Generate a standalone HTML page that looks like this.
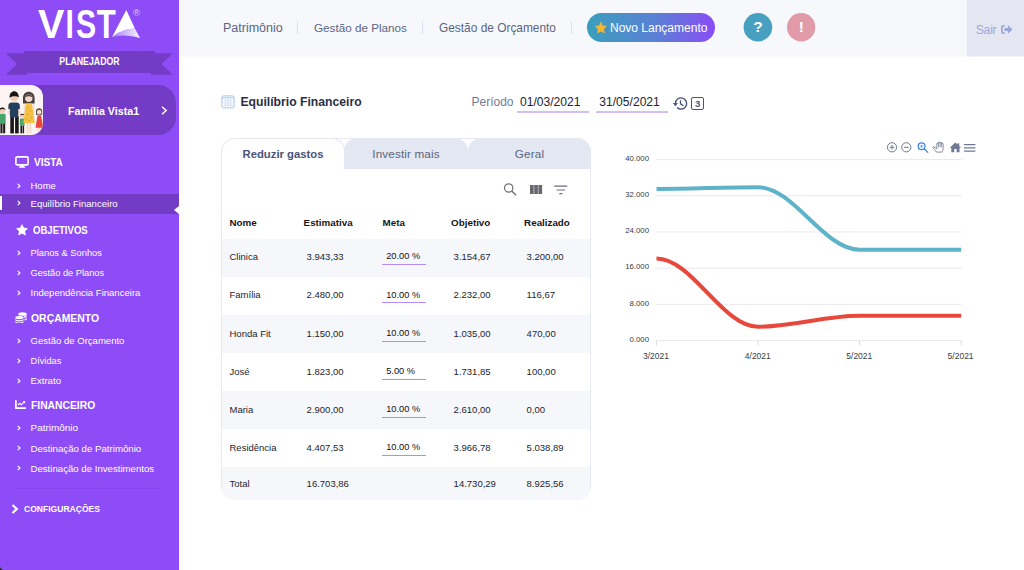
<!DOCTYPE html>
<html lang="pt-BR">
<head>
<meta charset="utf-8">
<title>Vista - Equilíbrio Financeiro</title>
<style>
*{box-sizing:border-box;margin:0;padding:0}
html,body{width:1024px;height:570px;overflow:hidden;background:#fff}
body{font-family:"Liberation Sans",sans-serif;color:#2d3142;position:relative}
ul{list-style:none}
svg{display:block}
.abs{position:absolute}
.t{position:absolute;white-space:nowrap;line-height:1}

/* ---------- sidebar ---------- */
#side{position:absolute;left:0;top:0;width:179px;height:570px;background:#8d4cf6;color:#fff}
#logo{position:absolute;left:30px;top:0;width:128px;height:48px}
#ribbon{position:absolute;left:0;top:48px;width:179px;height:30px}
#fam{position:absolute;left:0;top:85px;width:176px;height:50px;background:#733bc6;border-radius:0 18px 18px 0}
#fam .pic{position:absolute;left:0;top:0;width:43px;height:50px;background:#fcf3f3;border-radius:0 12px 12px 0;overflow:hidden}
#fam .nm{left:68px;top:20.600px;font-size:10.7px;font-weight:bold}
.sec{font-weight:bold;font-size:10.8px;left:34px;transform-origin:0 50%;transform:scaleX(.9)}
.it{font-size:9.6px;left:30.5px}
.chev{position:absolute;left:16.700px;width:4px;height:6px}
#active{position:absolute;left:0;top:194px;width:179px;height:19.5px;background:#733bc6}
#active i{position:absolute;left:0;top:2px;width:2px;height:14px;background:#fff}
#notch{position:absolute;left:174px;top:206px;width:0;height:0;border-top:4px solid transparent;border-bottom:4px solid transparent;border-right:5px solid #fff}
#sdiv{position:absolute;left:15px;top:488px;width:148px;height:1px;background:rgba(40,0,120,.09)}

/* ---------- top bar ---------- */
#top{position:absolute;left:179px;top:0;width:845px;height:57px;background:#f7f8fb;border-bottom:1px solid #fbfbfd}
#top .nv{font-size:12px;color:#5b6583;top:18px;height:20px;line-height:20px}
#top .sp{position:absolute;top:21px;width:1px;height:13px;background:#dde1ee}
#novo{position:absolute;left:408px;top:13px;width:128px;height:29px;border-radius:15px;background:linear-gradient(90deg,#3a9fbd 0%,#5b7fd6 55%,#8a4cf6 100%);color:#fff}
#novo span{left:23px;top:8.500px;font-size:12px}
.circ{position:absolute;top:12.900px;width:28.600px;height:28.600px;border-radius:50%;color:#fff;font-weight:bold;font-size:15.500px;text-align:center;line-height:28px}
#sair{position:absolute;left:788px;top:0;width:57px;height:57px;background:#e4e7f1;color:#9ba7da;border-bottom:1px solid #f1f3f8}
#sair span{left:8.700px;top:24.100px;font-size:12.300px;letter-spacing:-.28px}

/* ---------- content ---------- */
#ttl{left:240.400px;top:96px;font-size:12.2px;font-weight:bold;color:#2c3043}
.per{font-size:12px;top:95.900px}
.ul{position:absolute;top:111px;height:2px;background:#d3c0f7}
#card{position:absolute;left:221px;top:138px;width:370px;height:362px;border:1px solid #e7e9f2;border-radius:14px;background:#fff}
.tab{position:absolute;top:-1px;height:31px;background:#e4e8f3;border-radius:13px 13px 0 0;color:#5b6479;font-size:11.700px;letter-spacing:.14px;text-align:center;line-height:32.300px}
.tab.on{background:#fff;color:#4a5477;font-weight:bold;font-size:11.300px;letter-spacing:0;border:1px solid #e7e9f2;border-bottom:0;border-radius:14px 13px 0 0;line-height:30.300px}
table{position:absolute;left:0;top:68px;width:368px;border-collapse:separate;border-spacing:0;font-size:9.500px;color:#23252e}
th{height:31.500px;text-align:left;font-weight:bold;font-size:9.800px;padding:0;color:#16171d}
td{height:38.150px;padding:0 0 1.600px 0}
tr.z td{background:#f6f7fb}
tr.tot td{height:33px;padding-bottom:1.500px}
tr.tot td:first-child{border-bottom-left-radius:13px}
tr.tot td:last-child{border-bottom-right-radius:13px}
th:nth-child(1),td:nth-child(1){padding-left:7.500px;width:82.500px}
th:nth-child(n+2),td:nth-child(n+2){text-indent:-0.900px}
th:nth-child(2){width:79px}td:nth-child(2){padding-left:3px}
th:nth-child(3){width:68.500px}
th:nth-child(4){width:73px}td:nth-child(4){padding-left:2.500px}
td:nth-child(5){padding-left:2.500px}
.meta{display:block;width:43.400px;height:17px;margin-left:-1.200px;padding:4.200px 0 0 4.800px;font-size:9.250px;color:#111;border-bottom:1px solid #b58cf5;line-height:1}
</style>
</head>
<body>

<!-- ================= SIDEBAR ================= -->
<nav id="side">
  <svg id="logo" viewBox="30 0 128 48">
    <defs><linearGradient id="lg" x1="0" y1="0" x2="1" y2="0"><stop offset="0" stop-color="#a273f8"/><stop offset="0.45" stop-color="#cdb5fb"/><stop offset="1" stop-color="#f4eeff"/></linearGradient></defs>
    <text y="37.7" font-family="Liberation Sans, sans-serif" font-weight="bold" font-size="40" fill="#fff"><tspan x="38.1" textLength="26.3" lengthAdjust="spacingAndGlyphs">V</tspan><tspan x="65.6" textLength="8.4" lengthAdjust="spacingAndGlyphs">I</tspan><tspan x="76" textLength="20.2" lengthAdjust="spacingAndGlyphs">S</tspan><tspan x="96.7" textLength="19" lengthAdjust="spacingAndGlyphs">T</tspan><tspan x="118.4" y="33" font-size="22" textLength="15.6" lengthAdjust="spacingAndGlyphs">A</tspan></text>
    <path d="M112.1 37 Q126 33.4 140.1 38 L134.9 28.6 Q121.500 28.800 112.1 37 Z" fill="url(#lg)"/>
    <path d="M126.3 10 L112.1 37 Q121.500 28.800 134.9 28.6 Z" fill="#fff"/>
    <text x="136.600" y="16.050" text-anchor="middle" font-family="Liberation Sans, sans-serif" font-size="9.600" fill="#dccbfd">®</text>
  </svg>

  <svg id="ribbon" viewBox="0 48 179 30">
    <path d="M6 53.300H27.200V74.800H6L17 64.100Z" fill="#733bc6"/>
    <path d="M172.600 53.300H151.200V74.800H172.600L161.600 64.100Z" fill="#733bc6"/>
    <rect x="24" y="51.3" width="131" height="21.6" fill="#733bc6"/>
    <path d="M24 51.6 H155" stroke="#6a35bb" stroke-width="0.6" stroke-dasharray="1.2 1.2"/>
    <text x="59.300" y="65.100" font-family="Liberation Sans, sans-serif" font-weight="bold" font-size="10" fill="#fff" textLength="60.300" lengthAdjust="spacingAndGlyphs">PLANEJADOR</text>
  </svg>

  <div id="fam">
    <div class="pic"><svg width="43" height="50" viewBox="0 85 43 50">
      <g><!-- left boy -->
        <rect x="0.400" y="123" width="2.100" height="10.300" fill="#1e1e1e"/><rect x="3.100" y="123" width="2.100" height="10.300" fill="#1e1e1e"/>
        <rect x="-1" y="113.800" width="6.700" height="10" rx="1.500" fill="#4aa56a"/>
        <circle cx="2.300" cy="110.300" r="2.900" fill="#f1cdb5"/><path d="M-0.700 110.200a3.100 3.100 0 0 1 6.100-.300c-2-1.200-4.200-1.100-6.100.300z" fill="#1e1e1e"/></g>
      <g><!-- dad -->
        <rect x="10.300" y="116" width="3.600" height="17.400" fill="#171717"/><rect x="15.100" y="116" width="3.600" height="17.400" fill="#171717"/>
        <rect x="8.400" y="103.600" width="2" height="11.500" rx="1" fill="#f1cdb5"/><rect x="17.800" y="103.600" width="2" height="11.500" rx="1" fill="#f1cdb5"/>
        <path d="M8.400 106q0-3.600 3.400-3.600h4.600q3.400 0 3.400 3.600v3h-1.600v8.600h-8.200v-8.600h-1.600z" fill="#253f5e"/>
        <circle cx="14.100" cy="97" r="4.300" fill="#f1cdb5"/><path d="M9.600 97.800a4.600 4.600 0 0 1 9.100-.700c-.300-1-8.200-1.400-9.100.700z" fill="#151515"/><path d="M9.600 97.600c-.400-8.600 9.500-8.400 9.100-.300-2.700-2-6.300-2-9.100.300z" fill="#151515"/></g>
      <g><!-- small boy -->
        <rect x="20.400" y="125.500" width="1.600" height="7.800" fill="#1e1e1e"/><rect x="22.500" y="125.500" width="1.600" height="7.800" fill="#1e1e1e"/>
        <rect x="19.800" y="118.500" width="4.800" height="7.600" rx="1.100" fill="#4aa56a"/>
        <circle cx="22.200" cy="115.700" r="2.300" fill="#f1cdb5"/><path d="M19.800 115.500a2.500 2.500 0 0 1 4.800-.100c-1.600-.900-3.300-.900-4.800.100z" fill="#1e1e1e"/></g>
      <g><!-- mom -->
        <path d="M23 98c0-8.400 11.600-8.400 11.600 0v5.500h-11.600z" fill="#453f3e"/>
        <rect x="26.700" y="122" width="1.700" height="11.300" fill="#f4d8c8"/><rect x="29.500" y="122" width="1.700" height="11.300" fill="#f4d8c8"/>
        <rect x="23.900" y="104.400" width="1.700" height="10.500" rx=".8" fill="#f4d8c8"/><rect x="32.500" y="104.400" width="1.700" height="10.500" rx=".8" fill="#f4d8c8"/>
        <path d="M26 103.400h5.800l3.100 19.600h-11.600z" fill="#f4c242"/>
        <circle cx="28.800" cy="98.300" r="3.700" fill="#f4d8c8"/><path d="M25 97.400c1-3.600 6.600-3.600 7.600 0-2.500-1.400-5.100-1.400-7.600 0z" fill="#453f3e"/>
        <g fill="#e25c3c"><circle cx="27.400" cy="108" r=".5"/><circle cx="30.200" cy="111" r=".5"/><circle cx="27.800" cy="114.500" r=".5"/><circle cx="31.300" cy="117.500" r=".5"/><circle cx="26" cy="119" r=".5"/><circle cx="29.300" cy="120.600" r=".5"/></g></g>
      <g><!-- girl -->
        <path d="M36 111.600c0-4.400 6.200-4.400 6.200 0v3.200h-6.200z" fill="#453f3e"/>
        <rect x="37.700" y="127" width="1.200" height="3.800" fill="#f4d8c8"/><rect x="39.700" y="127" width="1.200" height="3.800" fill="#f4d8c8"/>
        <path d="M37.600 115.300h3.400l2.300 12.400h-7.800z" fill="#e8483c"/>
        <circle cx="39.200" cy="112.200" r="2.400" fill="#f4d8c8"/></g>
    </svg></div>
    <span class="t nm">Família Vista1</span>
    <svg class="abs" style="left:160.800px;top:20.700px" width="7" height="9" viewBox="0 0 7 9"><path d="M1 0.8 L5.2 4.5 L1 8.2" fill="none" stroke="#fff" stroke-width="1.5"/></svg>
  </div>

  <div id="active"><i></i></div>
  <div id="notch"></div>

  <span class="t sec" style="top:157.30px;transform:scaleX(0.932)">VISTA</span>
  <span class="t it" style="top:181.10px;font-size:9.52px">Home</span>
  <span class="t it" style="top:198.70px;font-size:9.57px">Equilíbrio Financeiro</span>

  <span class="t sec" style="top:224.70px;left:33px;transform:scaleX(0.885)">OBJETIVOS</span>
  <span class="t it" style="top:248.90px;font-size:9.32px">Planos &amp; Sonhos</span>
  <span class="t it" style="top:269.25px;font-size:9.28px">Gestão de Planos</span>
  <span class="t it" style="top:288.2px;font-size:9.56px">Independência Financeira</span>

  <span class="t sec" style="top:312.80px;left:31.400px;transform:scaleX(0.965)">ORÇAMENTO</span>
  <span class="t it" style="top:336px;font-size:9.55px">Gestão de Orçamento</span>
  <span class="t it" style="top:357.25px;font-size:9.22px">Dívidas</span>
  <span class="t it" style="top:376.300px;font-size:9.63px">Extrato</span>

  <span class="t sec" style="top:399.80px;left:31.400px;transform:scaleX(0.955)">FINANCEIRO</span>
  <span class="t it" style="top:423.20px;font-size:9.96px">Patrimônio</span>
  <span class="t it" style="top:443.50px;font-size:9.69px">Destinação de Patrimônio</span>
  <span class="t it" style="top:463.50px;font-size:9.63px">Destinação de Investimentos</span>

<svg class="chev" style="top:182.76px" viewBox="0 0 4 6"><path d="M0.7 0.8L3 3L0.7 5.2" fill="none" stroke="#fff" stroke-width="1.15"/></svg><svg class="chev" style="top:200.40px" viewBox="0 0 4 6"><path d="M0.7 0.8L3 3L0.7 5.2" fill="none" stroke="#fff" stroke-width="1.15"/></svg><svg class="chev" style="top:249.60px" viewBox="0 0 4 6"><path d="M0.7 0.8L3 3L0.7 5.2" fill="none" stroke="#fff" stroke-width="1.15"/></svg><svg class="chev" style="top:269.95px" viewBox="0 0 4 6"><path d="M0.7 0.8L3 3L0.7 5.2" fill="none" stroke="#fff" stroke-width="1.15"/></svg><svg class="chev" style="top:289.95px" viewBox="0 0 4 6"><path d="M0.7 0.8L3 3L0.7 5.2" fill="none" stroke="#fff" stroke-width="1.15"/></svg><svg class="chev" style="top:337.60px" viewBox="0 0 4 6"><path d="M0.7 0.8L3 3L0.7 5.2" fill="none" stroke="#fff" stroke-width="1.15"/></svg><svg class="chev" style="top:357.95px" viewBox="0 0 4 6"><path d="M0.7 0.8L3 3L0.7 5.2" fill="none" stroke="#fff" stroke-width="1.15"/></svg><svg class="chev" style="top:377.95px" viewBox="0 0 4 6"><path d="M0.7 0.8L3 3L0.7 5.2" fill="none" stroke="#fff" stroke-width="1.15"/></svg><svg class="chev" style="top:424.90px" viewBox="0 0 4 6"><path d="M0.7 0.8L3 3L0.7 5.2" fill="none" stroke="#fff" stroke-width="1.15"/></svg><svg class="chev" style="top:445.20px" viewBox="0 0 4 6"><path d="M0.7 0.8L3 3L0.7 5.2" fill="none" stroke="#fff" stroke-width="1.15"/></svg><svg class="chev" style="top:465.20px" viewBox="0 0 4 6"><path d="M0.7 0.8L3 3L0.7 5.2" fill="none" stroke="#fff" stroke-width="1.15"/></svg>
  <!-- section icons -->
  <svg class="abs" style="left:15px;top:156px" width="14" height="12" viewBox="0 0 14 12"><rect x="0.9" y="0.9" width="12.2" height="8" rx="1.2" fill="none" stroke="#fff" stroke-width="1.6"/><path d="M5.6 9.2h2.8l.5 1.6H5.1z M3.8 10.6h6.4v1.1H3.8z" fill="#fff"/></svg>
  <svg class="abs" style="left:15.500px;top:224.200px" width="12" height="11.500" viewBox="-1 -1 26 25"><path d="M12 0.600l3.500 7.300 8 1.100-5.800 5.600 1.400 8-7.100-3.800-7.100 3.800 1.400-8L0.500 9l8-1.100z" fill="#fff" stroke="#fff" stroke-width="2" stroke-linejoin="round"/></svg>
  <svg class="abs" style="left:14.8px;top:311.8px" width="12" height="11.6" viewBox="0 0 12 11.6">
    <g fill="#fff"><ellipse cx="7.6" cy="1.9" rx="4.2" ry="1.7"/><path d="M11.8 3.2c0 .9-1.2 1.5-2.6 1.7v-.3c-.7-.5-1.7-.8-2.9-.9-1.6-.2-2.9-.8-2.9-1.6v1.5-0.1z"/><path d="M11.8 3.4v1.4c0 .7-1 1.3-2.4 1.6V5.3c1.300-.3 2.400-.9 2.400-1.900z M11.8 5.6V7c0 .7-1 1.300-2.400 1.600V7.500c1.300-.300 2.400-.900 2.400-1.900z"/>
    <ellipse cx="4.4" cy="5.6" rx="4.2" ry="1.7"/><path d="M0.2 6.800c.7 1 2.300 1.500 4.200 1.500s3.500-.5 4.200-1.500v1c0 .9-1.900 1.700-4.200 1.700S0.200 8.700 0.200 7.800z M0.200 9c.700 1 2.300 1.500 4.200 1.500s3.500-.5 4.200-1.500v1c0 .9-1.900 1.600-4.200 1.600S0.200 10.900 0.200 10z"/></g></svg>
  <svg class="abs" style="left:14.8px;top:400.2px" width="11.6" height="9" viewBox="0 0 11.6 9"><path d="M0.9 0.200V8.100H11.400" fill="none" stroke="#fff" stroke-width="1.700"/><path d="M2.900 5.200L4.800 3.300L6.300 4.700L9 2.100" fill="none" stroke="#fff" stroke-width="1.100"/><circle cx="9.200" cy="2.100" r="1.200" fill="#fff"/></svg>
  <svg class="abs" style="left:11px;top:504px" width="8" height="10" viewBox="0 0 8 10"><path d="M1.500 1L5.800 5L1.500 9" fill="none" stroke="#fff" stroke-width="2.200"/></svg>
  <div id="sdiv"></div>
  <i class="abs" style="left:0;bottom:0;width:3px;height:3px;background:radial-gradient(circle at 100% 0,rgba(30,30,30,0) 2.300px,#26262a 3px)"></i>
  <span class="t" style="left:24px;top:504.6px;font-size:8.55px;font-weight:bold">CONFIGURAÇÕES</span>
</nav>

<!-- ================= TOP BAR ================= -->
<header id="top">
  <span class="t nv" style="left:44px;font-size:12.5px">Patrimônio</span>
  <i class="sp" style="left:118px"></i>
  <span class="t nv" style="left:135px;font-size:11.7px">Gestão de Planos</span>
  <i class="sp" style="left:243px"></i>
  <span class="t nv" style="left:260px;font-size:11.9px">Gestão de Orçamento</span>
  <i class="sp" style="left:392px"></i>
  <div id="novo"><svg class="abs" style="left:7.800px;top:8.800px" width="11.800" height="11.400" viewBox="0 0 24 23"><path d="M12 0.600l3.300 7.200 7.900 1.000-5.800 5.500 1.500 7.800-6.900-3.800-6.900 3.800 1.500-7.800L0.800 8.800l7.900-1.000z" fill="#f7b731" stroke="#f7b731" stroke-width="1.500" stroke-linejoin="round"/></svg><span class="t">Novo Lançamento</span></div>
  <svg class="abs" style="left:561px;top:10px" width="80" height="36" viewBox="740 10 80 36" font-family="Liberation Sans, sans-serif" font-weight="bold" font-size="15.500" fill="#fff" text-anchor="middle">
    <circle cx="757.900" cy="27.250" r="14.300" fill="#47a0bf"/><text x="758.100" y="32">?</text>
    <circle cx="801.150" cy="27.250" r="14.200" fill="#e09aa8"/><text x="801.300" y="32">!</text>
  </svg>
  <div id="sair"><span class="t">Sair</span><svg class="abs" style="left:33.900px;top:25px" width="11.800" height="9" viewBox="0 0 11.800 9"><path d="M3.700 0.900H2.300Q0.900 0.900 0.900 2.300V6.700Q0.900 8.100 2.300 8.100H3.700" fill="none" stroke="#9ba7da" stroke-width="1.700"/><path d="M3.500 3H6.900V0.200L11.600 4.500L6.900 8.800V6H3.500z" fill="#9ba7da"/></svg></div>
</header>

<!-- ================= CONTENT ================= -->
<main id="main">
  <svg class="abs" style="left:221px;top:94.600px" width="14" height="14" viewBox="0 0 14 14">
    <rect x="0.900" y="0.900" width="12.200" height="12" rx="1.800" fill="#f6f9fd" stroke="#aac6e8" stroke-width="1"/>
    <path d="M0.900 2.900H13.100" stroke="#aac6e8" stroke-width="0.900"/>
    <path d="M3.600 4.800h1.700v1.400H3.600zM6.200 4.800h1.700v1.400H6.200zM8.800 4.800h1.700v1.400H8.800zM3.600 7.300h1.700v1.200H3.600zM6.200 7.300h1.700v1.200H6.200zM8.800 7.300h1.700v1.200H8.800zM3.600 9.600h1.700v1.400H3.600zM6.200 9.600h1.700v1.400H6.200zM8.800 9.600h1.700v1.400H8.800z" fill="#c9d6ea"/>
  </svg>
  <h1 class="t" id="ttl">Equilíbrio Financeiro</h1>

  <span class="t per" style="left:471.5px;color:#6f7c98">Período</span>
  <span class="t per" style="left:520px;color:#23252e;font-size:12.1px">01/03/2021</span>
  <i class="ul" style="left:517px;width:71.5px"></i>
  <span class="t per" style="left:599.3px;color:#23252e;font-size:12.1px">31/05/2021</span>
  <i class="ul" style="left:596.3px;width:71.5px"></i>


  <svg class="abs" style="left:670px;top:95px" width="20" height="17" viewBox="670 95 20 17"><path d="M675.400 103.500A5.600 5.600 0 1 1 677.040 107.460" fill="none" stroke="#4a5578" stroke-width="1.400"/><path d="M672.800 103.100H677.900L675.400 106.300z" fill="#4a5578"/><path d="M680.500 100.200V103.900L683.400 105.600" fill="none" stroke="#4a5578" stroke-width="1.300"/></svg>
  <div class="abs" style="left:691.200px;top:97px;width:12.800px;height:13px;border:1.500px solid #4a5578;border-radius:2px;font-size:9.600px;font-weight:bold;line-height:11px;text-align:center;color:#4a5578">3</div>
  <section id="card">
    <div class="tab on" style="left:-1px;width:124px">Reduzir gastos</div>
    <div class="tab" style="left:122px;width:124px">Investir mais</div>
    <div class="tab" style="left:246px;width:123px;border-top-right-radius:14px">Geral</div>
    <svg class="abs" style="left:281px;top:44px" width="66" height="15" viewBox="503 183 66 15">
      <circle cx="508.700" cy="188" r="4.200" fill="none" stroke="#6c6f76" stroke-width="1.200"/><path d="M511.700 191L516.100 195.300" stroke="#6c6f76" stroke-width="1.400"/>
      <path d="M530 185h3.700v9.100h-3.700zM534.200 185h3.700v9.100h-3.700zM538.400 185h3.700v9.100h-3.700z" fill="#66686d"/>
      <path d="M554.200 186.200H567.300M556.500 190H565.100M559.300 193.600H562.400" stroke="#6c6f76" stroke-width="1.200"/>
    </svg>
    <table>
      <thead><tr><th>Nome</th><th>Estimativa</th><th>Meta</th><th>Objetivo</th><th>Realizado</th></tr></thead>
      <tbody>
        <tr class="z"><td>Clinica</td><td>3.943,33</td><td><span class="meta">20.00 %</span></td><td>3.154,67</td><td>3.200,00</td></tr>
        <tr><td>Família</td><td>2.480,00</td><td><span class="meta">10.00 %</span></td><td>2.232,00</td><td>116,67</td></tr>
        <tr class="z"><td>Honda Fit</td><td>1.150,00</td><td><span class="meta">10.00 %</span></td><td>1.035,00</td><td>470,00</td></tr>
        <tr><td>José</td><td>1.823,00</td><td><span class="meta">5.00 %</span></td><td>1.731,85</td><td>100,00</td></tr>
        <tr class="z"><td>Maria</td><td>2.900,00</td><td><span class="meta">10.00 %</span></td><td>2.610,00</td><td>0,00</td></tr>
        <tr><td>Residência</td><td>4.407,53</td><td><span class="meta">10.00 %</span></td><td>3.966,78</td><td>5.038,89</td></tr>
        <tr class="z tot"><td>Total</td><td>16.703,86</td><td></td><td>14.730,29</td><td>8.925,56</td></tr>
      </tbody>
    </table>
  </section>

  <svg class="abs" id="chart" style="left:610px;top:130px" width="414" height="250" viewBox="610 130 414 250">
    <g stroke="#e8e9ec" stroke-width="1" fill="none" transform="translate(0 0.25)"><path d="M656 340.3H961.4"/><path d="M656 304.1H961.4"/><path d="M656 267.9H961.4"/><path d="M656 231.7H961.4"/><path d="M656 195.5H961.4"/><path d="M656 159.3H961.4"/></g>
    <g stroke="#dcdfe4" stroke-width="1" fill="none"><path d="M656.5 340.3V345.6"/><path d="M758.0 340.3V345.6"/><path d="M859.5 340.3V345.6"/><path d="M961.2 340.3V345.6"/></g>
    <g font-family="Liberation Sans, sans-serif" font-size="7.8" fill="#373d3f" text-anchor="end"><text x="649" y="341.7">0.000</text><text x="649" y="305.5">8.000</text><text x="649" y="269.3">16.000</text><text x="649" y="233.1">24.000</text><text x="649" y="196.9">32.000</text><text x="649" y="160.7">40.000</text></g>
    <g font-family="Liberation Sans, sans-serif" font-size="8.5" fill="#373d3f" text-anchor="middle"><text x="656.0" y="359.4">3/2021</text><text x="757.8" y="359.4">4/2021</text><text x="859.3" y="359.4">5/2021</text><text x="960.6" y="359.4">5/2021</text></g>
    <path d="M656.5 188.94 C692.0 188.94 722.5 187.13 758.0 187.13 C793.5 187.13 824.0 249.80 859.5 249.80 C895.1 249.80 925.6 249.80 961.2 249.80" fill="none" stroke="#5fb3c9" stroke-width="4" stroke-linecap="butt"/>
    <path d="M656.5 258.40 C692.0 258.40 722.5 326.73 758.0 326.73 C793.5 326.73 824.0 315.73 859.5 315.73 C895.1 315.73 925.6 315.73 961.2 315.73" fill="none" stroke="#e8483c" stroke-width="4" stroke-linecap="butt"/>
    <!-- toolbar -->
    <g fill="none" stroke="#6e7a94" stroke-width="1">
      <circle cx="892" cy="147.3" r="4.6"/><path d="M889.6 147.3h4.8M892 144.9v4.8"/>
      <circle cx="906.3" cy="147.3" r="4.6"/><path d="M903.9 147.3h4.8"/>
    </g>
    <g fill="none" stroke="#3b86e8" stroke-width="1.3">
      <circle cx="921.6" cy="146.2" r="3.4"/><path d="M924.2 148.8L927.8 152.4" stroke-linecap="round"/><path d="M920.2 146.2h2.8M921.6 144.8v2.8" stroke-width="0.8"/>
    </g>
    <path d="M936.800 148.800V143.700a.8 .8 0 0 1 1.600 0V142.900a.8 .8 0 0 1 1.600 0V143.100a.8 .8 0 0 1 1.600 0V144a.75 .75 0 0 1 1.500 0V148.800c0 1.700-.6 2.400-.9 3.300H936.500c-.8-1.500-2.300-2.900-3.600-4.300-.5-.7.400-1.400 1.100-.9z" fill="#fff" stroke="#6e7a94" stroke-width="0.850" stroke-linejoin="round"/><path d="M938.400 143.700V147.300M940 142.900V147.300M941.600 143.100V147.300" fill="none" stroke="#6e7a94" stroke-width="0.800"/>
    <path d="M949.700 147.700L955.400 142.500L957.700 144.600V143.200H959.200V146L961.100 147.700H959.500V152.300H956.600V149H954.200V152.300H951.300V147.700Z" fill="#6e7a94"/>
    <path d="M964 144.6H975.4M964 147.9H975.4M964 151.1H975.4" stroke="#6e7a94" stroke-width="1.3" fill="none"/>
  </svg>
</main>

</body>
</html>
